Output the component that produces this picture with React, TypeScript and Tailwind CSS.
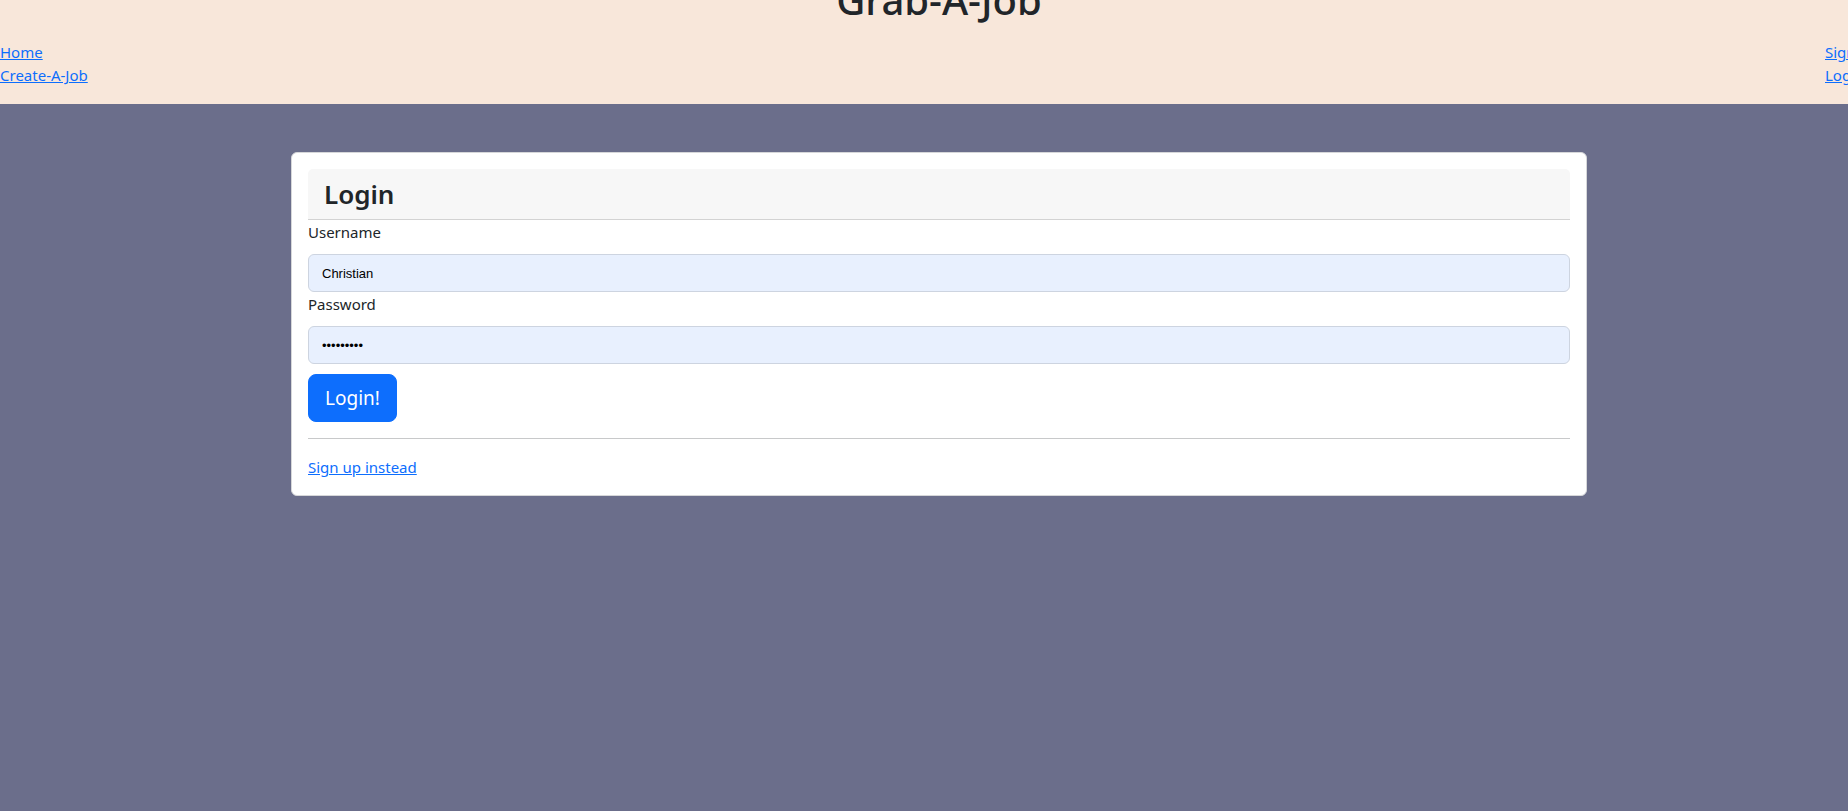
import React from "react";

export default function App() {
  return (
    <div className="w-full h-screen overflow-hidden bg-[#6b6e8b] text-[#212529] font-['Noto_Sans',sans-serif]">
      <div className="w-[1878px]">
        <header className="flex h-[104px] flex-col bg-[#f8e7da]">
          <h1 className="-mt-[24px] text-center text-[40px] leading-[48px] font-medium">Grab-A-Job</h1>
          <div className="mt-[17px] flex justify-between text-[15px] leading-[23px]">
            <nav className="flex flex-col items-start">
              <a href="#" className="text-[#0d6efd] underline">Home</a>
              <a href="#" className="text-[#0d6efd] underline">Create-A-Job</a>
            </nav>
            <nav className="flex flex-col items-start">
              <a href="#" className="text-[#0d6efd] underline">Sign up</a>
              <a href="#" className="text-[#0d6efd] underline">Login</a>
            </nav>
          </div>
        </header>
        <main className="pt-12">
          <div className="mx-auto w-[1296px] rounded-[6px] border border-[#d6d7d9] bg-white p-4">
            <div className="rounded-t-[5px] border-b border-[#d3d3d3] bg-[#f7f7f7] px-4 py-2">
              <h3 className="text-[26px] leading-[34px] font-semibold">Login</h3>
            </div>
            <form onSubmit={(e) => e.preventDefault()}>
              <label className="block text-[15px] leading-6 mb-[10px]">Username</label>
              <input
                type="text"
                readOnly
                value="Christian"
                className="block h-[38px] w-full rounded-[6px] border border-[#cdd4e0] bg-[#e8f0fe] px-[13px] font-['Liberation_Sans',Arial,sans-serif] text-[13px] text-black outline-none"
              />
              <label className="block text-[15px] leading-6 mb-[10px]">Password</label>
              <input
                type="password"
                readOnly
                value="christian"
                className="block h-[38px] w-full rounded-[6px] border border-[#cdd4e0] bg-[#e8f0fe] px-[13px] font-['Liberation_Sans',Arial,sans-serif] text-[13px] text-black outline-none"
              />
              <button
                type="submit"
                className="mt-[10px] rounded-lg border border-[#0d6efd] bg-[#0d6efd] px-4 py-2 text-[19px] leading-[30px] text-white"
              >
                Login!
              </button>
            </form>
            <hr className="my-4 border-t border-[#c8c9ca]" />
            <a href="#" className="block w-fit text-[15px] leading-6 text-[#0d6efd] underline">Sign up instead</a>
          </div>
        </main>
      </div>
    </div>
  );
}
